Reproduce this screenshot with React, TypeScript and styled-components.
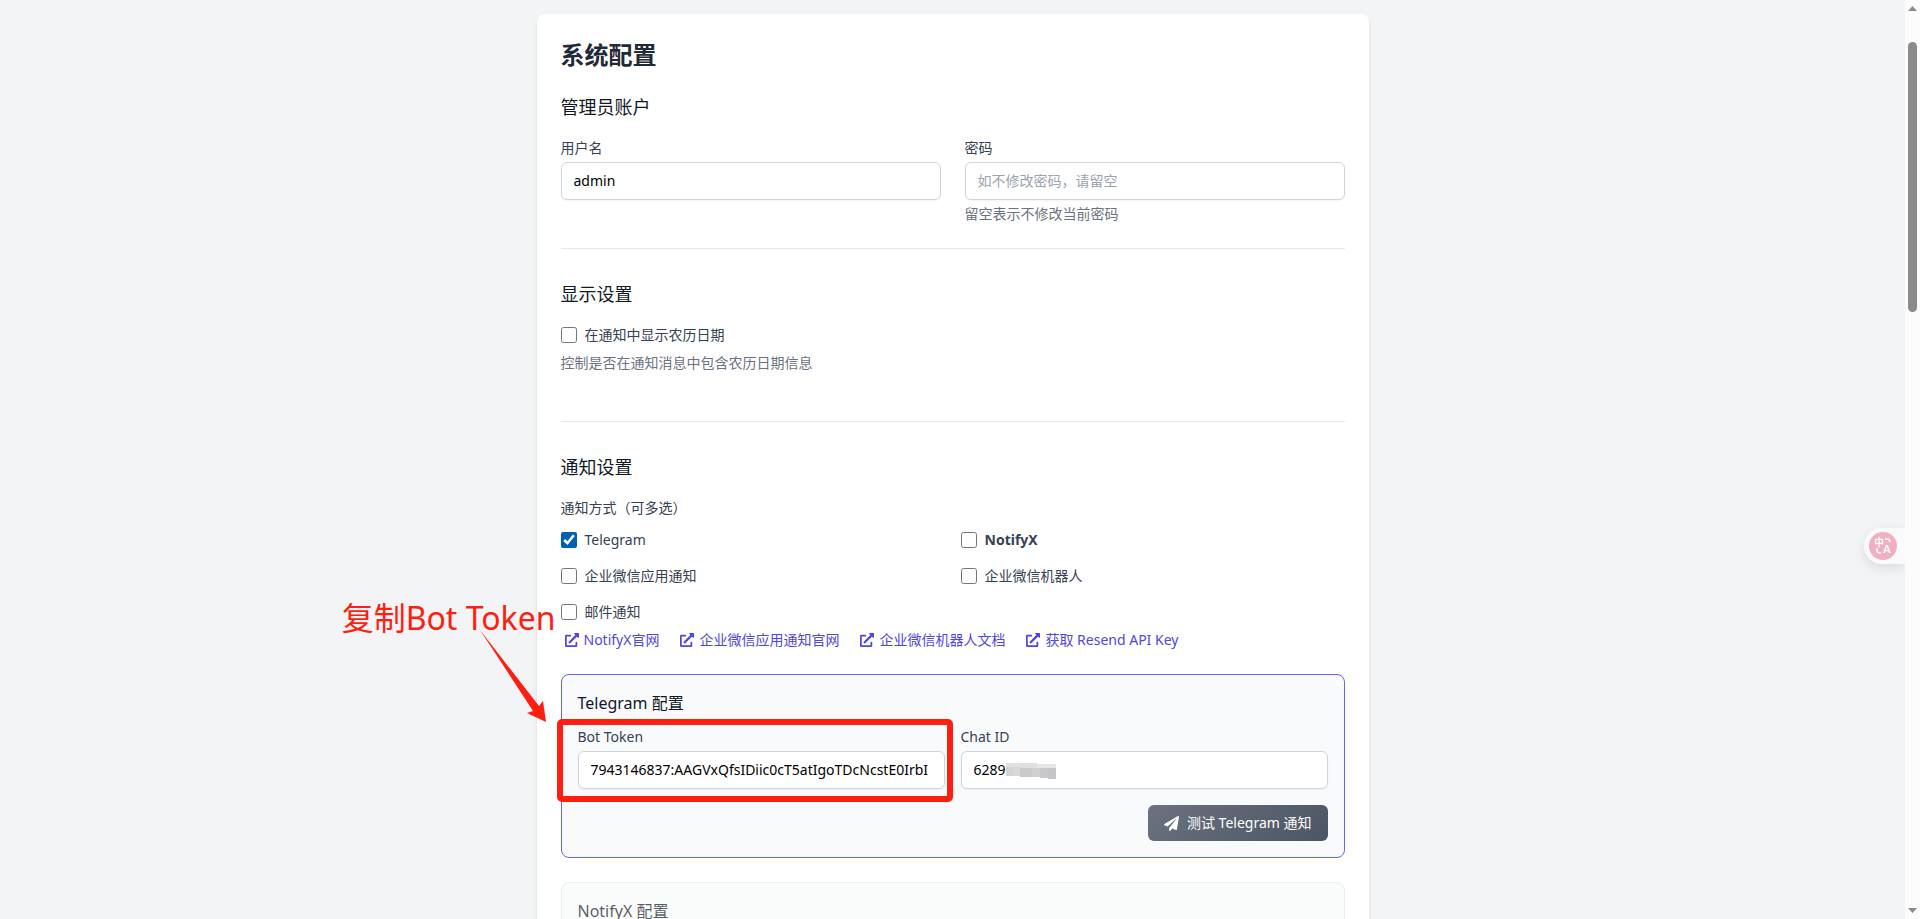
import React, { useState } from "react";
import styled, { createGlobalStyle, css } from "styled-components";
import { FaExternalLinkAlt, FaPaperPlane } from "react-icons/fa";

const GlobalStyle = createGlobalStyle`
  *, *::before, *::after { box-sizing: border-box; }
  body {
    margin: 0;
    background: #f3f4f6;
    color: #111827;
    font-family: "Noto Sans", "Noto Sans CJK SC", sans-serif;
    font-size: 14px;
    line-height: 20px;
  }
  h2, h3, h4, p { margin: 0; }
  button, input { font: inherit; }
`;

const Window = styled.div`
  display: flex;
  height: 100vh;
  overflow: hidden;
`;

const Page = styled.main`
  flex: 1;
  min-width: 0;
  overflow: hidden;
  padding: 14px 32px 0;
`;

const Card = styled.div`
  max-width: 832px;
  margin: 0 auto;
  padding: 24px;
  background: #ffffff;
  border-radius: 8px;
  box-shadow: 0 4px 6px -1px rgba(0, 0, 0, 0.1), 0 2px 4px -2px rgba(0, 0, 0, 0.1);
`;

const Title = styled.h2`
  margin-bottom: 22px;
  font-size: 24px;
  line-height: 34px;
  font-weight: 700;
  color: #1f2937;
`;

const Form = styled.form`
  display: flex;
  flex-direction: column;
  gap: 32px;
`;

const Section = styled.section<{ $divided?: boolean }>`
  ${({ $divided }) =>
    $divided &&
    css`
      padding-bottom: 24px;
      border-bottom: 1px solid #e5e7eb;
    `}
`;

const SectionTitle = styled.h3`
  margin-bottom: 18px;
  font-size: 18px;
  line-height: 26px;
  font-weight: 400;
`;

const Columns = styled.div<{ $gap: number }>`
  display: grid;
  grid-template-columns: 1fr 1fr;
  gap: ${({ $gap }) => $gap}px;
`;

const Field = styled.div`
  position: relative;
  display: flex;
  flex-direction: column;
  gap: 4px;
  min-width: 0;
`;

const Label = styled.label`
  color: #374151;
`;

const TextInput = styled.input`
  width: 100%;
  height: 38px;
  padding: 7px 12px 9px;
  border: 1px solid #d1d5db;
  border-radius: 6px;
  background: #ffffff;
  color: #000000;
  box-shadow: 0 1px 2px rgba(0, 0, 0, 0.05);
  outline: none;

  &::placeholder { color: #9ca3af; }
`;

const Hint = styled.p`
  color: #6b7280;
`;

const DisplayOptions = styled.div`
  display: flex;
  flex-direction: column;
  gap: 8px;
  padding-bottom: 24px;
`;

const CheckLabel = styled.label<{ $strong?: boolean }>`
  display: flex;
  align-items: center;
  gap: 8px;
  justify-self: start;
  color: #374151;
  font-weight: ${({ $strong }) => ($strong ? 700 : 400)};
`;

const Check = styled.input`
  width: 16px;
  height: 16px;
  margin: 0;
  accent-color: #0060b4;
`;

const MethodGroup = styled.fieldset`
  margin: 0;
  padding: 0;
  border: 0;
`;

const MethodLegend = styled.legend`
  margin-bottom: 12px;
  padding: 0;
  color: #374151;
`;

const Links = styled.nav`
  display: flex;
  flex-wrap: wrap;
  gap: 21px;
  margin: 8px 0 24px;
  padding-left: 4px;
`;

const DocLink = styled.a`
  display: inline-flex;
  align-items: center;
  gap: 5px;
  color: #4f46e5;
  text-decoration: none;
`;

const Panel = styled.section<{ $active?: boolean }>`
  position: relative;
  margin-bottom: 24px;
  padding: 16px;
  border: 1px solid ${({ $active }) => ($active ? "#6366f1" : "#e5e7eb")};
  border-radius: 8px;
  background: ${({ $active }) => ($active ? "#f9fafc" : "#f9fcfa")};
  opacity: ${({ $active }) => ($active ? 1 : 0.7)};
`;

const PanelTitle = styled.h4`
  margin-bottom: 12px;
  font-size: 16px;
  line-height: 24px;
  font-weight: 400;
`;

const PanelActions = styled.div`
  display: flex;
  justify-content: flex-end;
  margin-top: 16px;
`;

const TestButton = styled.button`
  display: inline-flex;
  align-items: center;
  gap: 8px;
  height: 36px;
  padding: 0 16px;
  border: 0;
  border-radius: 6px;
  background: linear-gradient(135deg, #6b7280 0%, #4b5563 100%);
  color: #ffffff;
`;

/* Annotation layer over the Telegram panel */
const Highlight = styled.div`
  position: absolute;
  inset: -8px -8px -13px -21px;
  border: 6px solid #ff1e10;
  border-radius: 5px;
  pointer-events: none;
`;

const Callout = styled.p`
  position: absolute;
  right: 100%;
  top: -79px;
  margin-right: 6px;
  font-size: 32px;
  line-height: 44px;
  white-space: nowrap;
  color: #ff1e10;
`;

const CalloutArrow = styled.svg`
  position: absolute;
  left: -82px;
  top: -45px;
  overflow: visible;
  pointer-events: none;
`;

const Mosaic = styled.svg`
  position: absolute;
  left: 45px;
  top: 36px;
`;

const TranslateTab = styled.button`
  position: fixed;
  right: 15px;
  top: 528px;
  width: 41px;
  height: 36px;
  padding: 4px 0 4px 5px;
  border: 0;
  border-radius: 18px 0 0 18px;
  background: #f9fafc;
  box-shadow: 0 4px 12px rgba(0, 0, 0, 0.1);
  line-height: 0;
  text-align: left;
`;

const ScrollBar = styled.div`
  position: relative;
  display: flex;
  flex-direction: column;
  align-items: center;
  flex: 0 0 15px;
  padding: 6px 0;
  background: #fcfcfc;
`;

const Thumb = styled.div`
  width: 9px;
  height: 270px;
  margin: 31px 0 auto;
  border-radius: 5px;
  background: #8b8b8b;
`;

const METHODS = [
  { id: "telegram", label: "Telegram" },
  { id: "notifyx", label: "NotifyX", strong: true },
  { id: "wecom-app", label: "企业微信应用通知" },
  { id: "wecom-bot", label: "企业微信机器人" },
  { id: "email", label: "邮件通知" },
];

const LINKS = ["NotifyX官网", "企业微信应用通知官网", "企业微信机器人文档", "获取 Resend API Key"];

export default function App() {
  const [enabled, setEnabled] = useState<string[]>(["telegram"]);
  const toggle = (id: string) =>
    setEnabled((list) => (list.includes(id) ? list.filter((x) => x !== id) : [...list, id]));

  return (
    <Window>
      <GlobalStyle />
      <Page>
        <Card>
          <Title>系统配置</Title>
          <Form onSubmit={(e) => e.preventDefault()}>
            <Section $divided>
              <SectionTitle>管理员账户</SectionTitle>
              <Columns $gap={24}>
                <Field>
                  <Label htmlFor="username">用户名</Label>
                  <TextInput id="username" type="text" defaultValue="admin" />
                </Field>
                <Field>
                  <Label htmlFor="password">密码</Label>
                  <TextInput id="password" type="password" placeholder="如不修改密码，请留空" />
                  <Hint>留空表示不修改当前密码</Hint>
                </Field>
              </Columns>
            </Section>

            <Section $divided>
              <SectionTitle>显示设置</SectionTitle>
              <DisplayOptions>
                <CheckLabel>
                  <Check type="checkbox" />
                  在通知中显示农历日期
                </CheckLabel>
                <Hint>控制是否在通知消息中包含农历日期信息</Hint>
              </DisplayOptions>
            </Section>

            <Section>
              <SectionTitle>通知设置</SectionTitle>
              <MethodGroup>
                <MethodLegend>通知方式（可多选）</MethodLegend>
                <Columns $gap={16}>
                  {METHODS.map((m) => (
                    <CheckLabel key={m.id} $strong={m.strong}>
                      <Check
                        type="checkbox"
                        checked={enabled.includes(m.id)}
                        onChange={() => toggle(m.id)}
                      />
                      {m.label}
                    </CheckLabel>
                  ))}
                </Columns>
              </MethodGroup>
              <Links>
                {LINKS.map((text) => (
                  <DocLink key={text} href="#">
                    <FaExternalLinkAlt size={14} />
                    {text}
                  </DocLink>
                ))}
              </Links>

              <Panel $active>
                <PanelTitle>Telegram 配置</PanelTitle>
                <Columns $gap={16}>
                  <Field>
                    <Label htmlFor="bot-token">Bot Token</Label>
                    <TextInput
                      id="bot-token"
                      type="text"
                      defaultValue="7943146837:AAGVxQfsIDiic0cT5atIgoTDcNcstE0IrbI"
                    />
                    <Highlight />
                  </Field>
                  <Field>
                    <Label htmlFor="chat-id">Chat ID</Label>
                    <TextInput id="chat-id" type="text" defaultValue="6289" />
                    <Mosaic width="50" height="16" aria-hidden="true" shapeRendering="crispEdges">
                      <rect x="0" y="0" width="14" height="4" fill="#e2e1e1" />
                      <rect x="14" y="0" width="17" height="5" fill="#dedfe0" />
                      <rect x="31" y="1" width="19" height="4" fill="#e6e6e7" />
                      <rect x="0" y="4" width="7" height="9" fill="#d6d4d3" />
                      <rect x="7" y="4" width="7" height="9" fill="#dad7d4" />
                      <rect x="14" y="5" width="12" height="9" fill="#c9cacc" />
                      <rect x="26" y="5" width="8" height="9" fill="#d0d0d1" />
                      <rect x="34" y="5" width="8" height="10" fill="#c8c8ca" />
                      <rect x="42" y="5" width="8" height="11" fill="#c4c5c7" />
                    </Mosaic>
                  </Field>
                </Columns>
                <PanelActions>
                  <TestButton type="button">
                    <FaPaperPlane size={15} />
                    测试 Telegram 通知
                  </TestButton>
                </PanelActions>
                <Callout>复制Bot Token</Callout>
                <CalloutArrow width="66" height="92" viewBox="0 0 66 92" aria-hidden="true">
                  <path d="M0 0 L59 76 L63 71 L66 92 L47 83 L53 81 Z" fill="#ff1e10" />
                </CalloutArrow>
              </Panel>

              <Panel>
                <PanelTitle>NotifyX 配置</PanelTitle>
              </Panel>
            </Section>
          </Form>
        </Card>
      </Page>

      <TranslateTab type="button" aria-label="翻译">
        <svg width="28" height="28" viewBox="0 0 28 28" aria-hidden="true">
          <circle cx="14" cy="14" r="14" fill="#f2afc2" />
          <text x="5" y="14" fontSize="10" fontWeight="700" fill="#ffffff">中</text>
          <text x="14" y="21" fontSize="11" fontWeight="700" fill="#ffffff">A</text>
          <path
            d="M16 7 h2 q3 0 3 3 M8 16 v2 q0 3 3 3 h1"
            fill="none"
            stroke="#ffffff"
            strokeWidth="1.6"
          />
        </svg>
      </TranslateTab>

      <ScrollBar aria-hidden="true">
        <svg width="9" height="5" viewBox="0 0 9 5">
          <path d="M4.500 0 L9 5 H0 Z" fill="#8b8b8b" />
        </svg>
        <Thumb />
        <svg width="9" height="5" viewBox="0 0 9 5">
          <path d="M0 0 H9 L4.500 5 Z" fill="#8b8b8b" />
        </svg>
      </ScrollBar>
    </Window>
  );
}
